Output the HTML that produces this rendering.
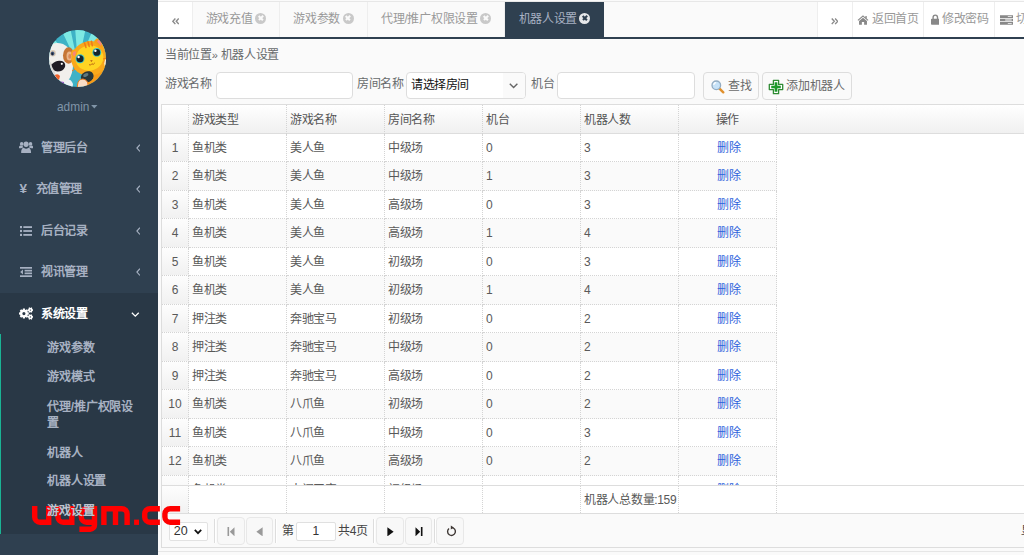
<!DOCTYPE html>
<html lang="zh-CN">
<head>
<meta charset="utf-8">
<title>机器人设置</title>
<style>
*{box-sizing:border-box;margin:0;padding:0}
html,body{width:1024px;height:555px;overflow:hidden}
body{font-family:"Liberation Sans",sans-serif;font-size:12px;color:#676a6c;background:#fafafa;position:relative}
/* sidebar */
#side{position:absolute;left:0;top:0;width:157.6px;height:555px;background:#2f4050;overflow:hidden}
#side .active{position:absolute;left:0;top:292.600px;width:158px;height:241.400px;background:#293846}
#side .gbar{position:absolute;left:0;top:334.300px;width:1.200px;height:199.700px;background:#1ab394}
.mi{position:absolute;left:0;width:158px;height:20px;line-height:20px;color:#a7b1c2;font-weight:bold;font-size:12px;letter-spacing:-0.4px;white-space:nowrap}
.mi .t{position:absolute;left:41.3px;top:0}
.mi svg{position:absolute}
.si{position:absolute;left:47px;color:#a7b1c2;font-weight:bold;font-size:12px;letter-spacing:-0.15px;line-height:15.5px;width:96px}
#admin{position:absolute;left:57px;top:99px;font-size:11.9px;line-height:16px;color:#8095a8;white-space:nowrap}
/* top bar */
#top{position:absolute;left:158px;top:1px;width:866px;height:38px;background:#fafafa;border-top:1px solid #e7e7e7;border-bottom:2px solid #2f4050}
.tab{position:absolute;top:0;height:35px;line-height:35.800px;color:#999;font-size:12px;letter-spacing:-0.3px;border-right:1px solid #eee;white-space:nowrap;background:#fafafa;text-align:center}
.tab.w{background:#fff;color:#999}
.tab.on{background:#2f4050;color:#a7b1c2;border-right:none}
.x{display:inline-block;width:11px;height:11px;border-radius:50%;background:#c9c9c9;position:relative;vertical-align:-0.8px;margin-left:2.4px}
.x:before,.x:after{content:"";position:absolute;left:2.7px;top:4.7px;width:5.6px;height:1.6px;background:#fafafa;transform:rotate(45deg)}
.x:after{transform:rotate(-45deg)}
.on .x{background:#e6e8ea}
.on .x:before,.on .x:after{background:#2f4050}
/* content */
.lbl{position:absolute;letter-spacing:-0.3px;font-size:12px;line-height:16px;color:#676a6c;white-space:nowrap}
.inp{position:absolute;background:#fff;border:1px solid #ddd;border-radius:4px}
.btn{position:absolute;background:#fafafa;border:1px solid #ddd;border-radius:4px;top:72.200px;height:28.200px;font-size:12px;letter-spacing:-0.3px;color:#6a6a6a;line-height:26px;white-space:nowrap}
/* grid */
#grid{position:absolute;left:161px;top:104px;width:863px;height:444px;background:#fff;border-top:1px solid #ddd;border-left:1px solid #ddd;overflow:hidden}
#hdr{position:absolute;left:0;top:0;width:862px;height:28.5px;background:linear-gradient(#fff,#f0f0f0);border-bottom:1px solid #ddd}
.hc{position:absolute;top:0;height:28.5px;line-height:30.5px;border-right:1px dotted #d4d4d4;color:#555;font-size:12px;letter-spacing:-0.3px;white-space:nowrap}
#gbody{position:absolute;left:0;top:28.5px;width:862px;height:352px;overflow:hidden}
#gfoot{position:absolute;left:0;top:380.3px;width:862px;height:28.1px;border-top:1px solid #ddd;background:#fff}
.row{position:absolute;left:0;height:28.5px;width:615px}
.row.odd{background:#fafafa}
.c{position:absolute;top:0;height:28.5px;line-height:29px;border-right:1px dotted #d4d4d4;border-bottom:1px dotted #d4d4d4;color:#595959;font-size:12px;letter-spacing:-0.3px;padding-left:3px;white-space:nowrap;overflow:hidden}
.c.n{left:0;width:27px;text-align:center;padding:0;letter-spacing:0;line-height:28px;background:linear-gradient(#fdfdfd,#f1f1f1);font-size:12px}
.c.a{left:27px;width:98px}.c.b{left:125px;width:98px}.c.d{left:223px;width:98px}.c.e{left:321px;width:98px}.c.f{left:419px;width:98px}
.c.g{left:517px;width:98px;text-align:center;padding:0 0 0 3px;color:#2e62dc}
#pager{position:absolute;left:0;top:408.4px;width:862px;height:34.5px;background:#fafafa;border-top:1px solid #ddd;border-bottom:1px solid #ddd}
.pb{position:absolute;top:3px;width:27.6px;height:27.5px;border:1px solid #e8e8e8;border-radius:4px;background:#f8f8f8}
.psep{position:absolute;top:5px;width:1px;height:24px;background:#ddd;border-right:1px solid #fff;width:2px}

</style>
</head>
<body>
<div id="side">
<div class="active"></div><div class="gbar"></div>
<div style="position:absolute;left:48.700px;top:29.900px;width:57.600px;height:57.600px;border-radius:50%;overflow:hidden"><svg style="position:absolute;left:-0.700px;top:-0.900px" width="60" height="60" viewBox="0 0 60 60">
<g>
<rect width="60" height="60" fill="#3eb2c6"/>
<path d="M30 36 L12 -2 L22 -2Z M30 36 L27 -2 L38 -2Z M30 36 L46 -2 L56 2Z M30 36 L2 6 L-3 16Z M30 36 L60 8 L62 18Z" fill="#7ee9e3"/>
<path d="M-2 18 Q6 12 15 15 Q24 19 25 30 Q26 44 20 52 L12 60 L-2 60Z" fill="#f1efec"/>
<path d="M-2 34 Q4 30 6 40 Q8 50 14 56 L12 60 L-2 60Z" fill="#dcdad8"/>
<ellipse cx="20.600" cy="26.500" rx="5.600" ry="8.200" fill="#c67636"/>
<ellipse cx="21.500" cy="27" rx="3" ry="4.600" fill="#eab58a"/>
<ellipse cx="21.800" cy="27.400" rx="1.500" ry="2.400" fill="#d98a58"/>
<ellipse cx="4.800" cy="24.300" rx="3" ry="3.300" fill="#d9c9b4"/>
<ellipse cx="4.600" cy="24.600" rx="1.900" ry="2.100" fill="#4a5f86"/>
<ellipse cx="4.400" cy="24.800" rx="1" ry="1.200" fill="#1d2230"/>
<path d="M3.500 35.500 Q8 30.500 14 32 Q18 33.500 17 38 Q15 42.500 9.500 42.500 Q4.500 42 3.500 35.500Z" fill="#1f1c25"/>
<circle cx="13.800" cy="34.800" r="1.100" fill="#fff"/>
<path d="M7 46 Q10 44 12 47 L11 51 L8 50Z" fill="#f0622c"/>
<path d="M9 52 L16 53 L15 57 L8 56Z" fill="#8f3cc8"/>
<path d="M17 52 Q22 48 25 55 L24 62 L17 62Z" fill="#eef2f5"/>
<path d="M34 44 Q44 40 58 36 L62 50 Q54 58 44 60 L36 58Z" fill="#f79a18"/>
<ellipse cx="42" cy="29.500" rx="18.800" ry="17.300" fill="#f9a81b" transform="rotate(-14 42 29.500)"/>
<ellipse cx="41.500" cy="29" rx="14" ry="12.500" fill="#ffd422" transform="rotate(-14 41.500 29)"/>
<path d="M23 26 Q23 19 29 21 Q30 24 27 29Z" fill="#f9a81b"/>
<path d="M24.500 25.500 Q25 21.500 28 22.500 Q28 25 26.500 27.500Z" fill="#f6857a"/>
<path d="M46 13 Q49 6 54 12 Q56 16 54 19Z" fill="#f9a01a"/>
<path d="M49 12.500 Q51 9.500 53 13 Q54 15.500 53 17Z" fill="#f6857a"/>
<path d="M36.500 14 l1.500 4.500 M40 12.800 l1.200 4.600 M43.500 12.300 l.8 4.500" stroke="#ee7a1a" stroke-width="1.500" fill="none" stroke-linecap="round"/>
<path d="M55 30 l4 -1 M55.500 33 l4 .5 M27 40 l-3 2" stroke="#ee7a1a" stroke-width="1" fill="none"/>
<circle cx="32" cy="29.700" r="4.500" fill="#35c0c6"/>
<circle cx="32" cy="29.700" r="3.500" fill="#16242b"/>
<circle cx="48.800" cy="23.400" r="4.400" fill="#35c0c6"/>
<circle cx="48.800" cy="23.400" r="3.400" fill="#16242b"/>
<circle cx="30.600" cy="28" r="1.200" fill="#fff"/><circle cx="47.400" cy="21.800" r="1.200" fill="#fff"/>
<path d="M42 31.600 l2.600 -.6 l-.9 1.900Z" fill="#b25a14"/>
<path d="M41 35.600 q1.600 1.400 2.800 -.8 q1.600 1.500 3 -.9" stroke="#b25a14" stroke-width=".9" fill="none"/>
<path d="M57.500 30 q3 3 .5 9 q-3 -3 -.5 -9Z" fill="#fff"/>
<ellipse cx="39.200" cy="47.800" rx="6.600" ry="5.400" fill="#27363a" transform="rotate(-25 39.200 47.800)"/>
<ellipse cx="37.800" cy="46" rx="2.800" ry="1.700" fill="#5f787d" transform="rotate(-25 37.800 46)"/>
<path d="M29.500 56 Q30 50 35 50 Q40 51 40 56 L40 62 L29 62Z" fill="#f8dcc6" stroke="#ee7a1a" stroke-width="1"/>
</g>
</svg></div>
<div id="admin">admin</div>
<svg style="position:absolute;left:91.400px;top:105.300px" width="6.600" height="3.600" viewBox="0 0 7 4"><path d="M0 0h7L3.5 4z" fill="#8095a8"/></svg>

<div class="mi" style="top:137.8px"><svg style="left:19.200px;top:3px" width="14.200" height="12.500" viewBox="0 0 16 13" preserveAspectRatio="none"><g fill="#a7b1c2"><circle cx="8" cy="3.4" r="2.9"/><path d="M3.4 13c-.6 0-1-.5-1-1.200 0-2.600 1.300-4.700 3.100-4.700.7.600 1.500 1 2.500 1s1.800-.4 2.500-1c1.800 0 3.100 2.100 3.100 4.700 0 .7-.4 1.200-1 1.200z"/><circle cx="3" cy="3" r="2"/><path d="M.6 7.600C.2 7.600 0 7.300 0 6.900 0 5.500.7 4.700 1.600 4.700c.4.400 .9.600 1.400.600.4 0 .8-.1 1.100-.3.100.7.400 1.300.8 1.800-.9.100-1.700.400-2.300.8z"/><circle cx="13" cy="3" r="2"/><path d="M15.400 7.600c.4 0 .6-.3.600-.7 0-1.400-.7-2.200-1.600-2.200-.4.400-.9.600-1.400.6-.4 0-.8-.1-1.100-.3-.1.700-.4 1.300-.8 1.800.9.100 1.700.4 2.300.8z"/></g></svg><span class="t">管理后台</span><svg style="left:135.600px;top:6.300px" width="4.600" height="8.200" viewBox="0 0 5 9"><path d="M4.300.8L1 4.500l3.300 3.700" stroke="#a7b1c2" stroke-width="1.300" fill="none"/></svg></div>

<div class="mi" style="top:178.8px"><span class="t" style="left:19.5px;font-weight:bold;font-size:13.5px">¥</span><span class="t" style="left:35.6px">充值管理</span><svg style="left:135.600px;top:6.300px" width="4.600" height="8.200" viewBox="0 0 5 9"><path d="M4.300.8L1 4.500l3.300 3.700" stroke="#a7b1c2" stroke-width="1.300" fill="none"/></svg></div>

<div class="mi" style="top:220.8px"><svg style="left:19.8px;top:5px" width="12" height="10" viewBox="0 0 13 10" preserveAspectRatio="none"><g fill="#a7b1c2"><rect x="0" y="0" width="2.200" height="2.200"/><rect x="0" y="3.900" width="2.200" height="2.200"/><rect x="0" y="7.800" width="2.200" height="2.200"/><rect x="3.600" y=".2" width="9.400" height="1.800"/><rect x="3.600" y="4.100" width="9.400" height="1.800"/><rect x="3.600" y="8" width="9.400" height="1.800"/></g></svg><span class="t">后台记录</span><svg style="left:135.600px;top:6.300px" width="4.600" height="8.200" viewBox="0 0 5 9"><path d="M4.300.8L1 4.500l3.300 3.700" stroke="#a7b1c2" stroke-width="1.300" fill="none"/></svg></div>

<div class="mi" style="top:261.8px"><svg style="left:19.8px;top:5px" width="12" height="10" viewBox="0 0 13 10" preserveAspectRatio="none"><g fill="#a7b1c2"><rect x="0" y="0" width="13" height="1.700"/><rect x="5" y="2.800" width="8" height="1.700"/><rect x="5" y="5.500" width="8" height="1.700"/><rect x="0" y="8.300" width="13" height="1.700"/><path d="M3.200 2.500L.2 5l3 2.500z"/></g></svg><span class="t">视讯管理</span><svg style="left:135.600px;top:6.300px" width="4.600" height="8.200" viewBox="0 0 5 9"><path d="M4.300.8L1 4.500l3.300 3.700" stroke="#a7b1c2" stroke-width="1.300" fill="none"/></svg></div>

<div class="mi" style="top:303.8px;color:#fff"><svg style="left:19.300px;top:3.300px" width="14.200" height="13" viewBox="0 0 16.200 14.400" preserveAspectRatio="none"><path fill="#fff" fill-rule="evenodd" d="M11.19 6.10L11.19 8.30L9.88 8.60L9.61 9.24L10.33 10.38L8.78 11.93L7.64 11.21L7.00 11.48L6.70 12.79L4.50 12.79L4.20 11.48L3.56 11.21L2.42 11.93L0.87 10.38L1.59 9.24L1.32 8.60L0.01 8.30L0.01 6.10L1.32 5.80L1.59 5.16L0.87 4.02L2.42 2.47L3.56 3.19L4.20 2.92L4.50 1.61L6.70 1.61L7.00 2.92L7.64 3.19L8.78 2.47L10.33 4.02L9.61 5.16L9.88 5.80ZM7.40 7.20A1.8 1.8 0 1 0 3.80 7.20A1.8 1.8 0 1 0 7.40 7.20ZM16.09 2.58L16.09 4.22L15.10 4.34L14.86 4.75L15.26 5.67L13.84 6.49L13.23 5.69L12.77 5.69L12.16 6.49L10.74 5.67L11.14 4.75L10.90 4.34L9.91 4.22L9.91 2.58L10.90 2.46L11.14 2.05L10.74 1.13L12.16 0.31L12.77 1.11L13.23 1.11L13.84 0.31L15.26 1.13L14.86 2.05L15.10 2.46ZM13.70 3.40A0.7 0.7 0 1 0 12.30 3.40A0.7 0.7 0 1 0 13.70 3.40ZM16.09 10.18L16.09 11.82L15.10 11.94L14.86 12.35L15.26 13.27L13.84 14.09L13.23 13.29L12.77 13.29L12.16 14.09L10.74 13.27L11.14 12.35L10.90 11.94L9.91 11.82L9.91 10.18L10.90 10.06L11.14 9.65L10.74 8.73L12.16 7.91L12.77 8.71L13.23 8.71L13.84 7.91L15.26 8.73L14.86 9.65L15.10 10.06ZM13.70 11.00A0.7 0.7 0 1 0 12.30 11.00A0.7 0.7 0 1 0 13.70 11.00Z"/></svg><span class="t">系统设置</span><svg style="left:131.400px;top:8px" width="8.600" height="5.600" viewBox="0 0 9 6"><path d="M.8.900L4.500 4.400 8.200.9" stroke="#fff" stroke-width="1.400" fill="none"/></svg></div>

<div class="si" style="top:341.3px">游戏参数</div>
<div class="si" style="top:370.3px">游戏模式</div>
<div class="si" style="top:400.3px">代理/推广权限设置</div>
<div class="si" style="top:445.8px">机器人</div>
<div class="si" style="top:473.8px">机器人设置</div>
<div class="si" style="top:503.500px;color:#bcc4d0;z-index:5">游戏设置</div>
</div>

<div id="top">
<div class="tab w" style="left:0;width:34.600px"><svg style="position:absolute;left:13.800px;top:16.200px" width="7.500" height="6.600" viewBox="0 0 8 7"><path d="M3.600.500L.9 3.500l2.700 3M7.200.500L4.500 3.500l2.700 3" stroke="#8a8a8a" stroke-width="1.500" fill="none"/></svg></div>
<div class="tab" style="left:34.600px;width:87.400px">游戏充值<span class="x"></span></div>
<div class="tab" style="left:122px;width:88px">游戏参数<span class="x"></span></div>
<div class="tab" style="left:210px;width:137px">代理/推广权限设置<span class="x"></span></div>
<div class="tab on" style="left:347px;width:99px;top:0;height:35px;line-height:35.800px">机器人设置<span class="x"></span></div>
<div class="tab w" style="left:659.4px;width:35.2px;border-left:1px solid #eee"><svg style="position:absolute;left:12.600px;top:16.200px" width="7.500" height="6.600" viewBox="0 0 8 7"><path d="M.8.500l2.700 3-2.700 3M4.400.500l2.700 3-2.700 3" stroke="#8a8a8a" stroke-width="1.500" fill="none"/></svg></div>
<div class="tab w" style="left:694.6px;width:71.2px;text-align:left;padding-left:19.5px"><svg style="position:absolute;left:4.500px;top:13px" width="12" height="10.200" viewBox="0 0 10 9"><path d="M5 .3L.2 4.400l.6.700L5 1.600l4.200 3.500.6-.7L8.300 3.100V.8H7.100v1.300zM1.500 5.300L5 2.400l3.500 2.900V8.700H6V6.200H4v2.500H1.500z" fill="#888"/></svg>返回首页</div>
<div class="tab w" style="left:765.8px;width:71.6px;text-align:left;padding-left:18.2px"><svg style="position:absolute;left:6.800px;top:12.400px" width="8.600" height="11" viewBox="0 0 8 10"><path d="M1.300 4.200V3a2.700 2.700 0 015.400 0v1.200h.6c.4 0 .7.300.7.700v4.300c0 .4-.3.700-.7.700H.7c-.4 0-.7-.3-.7-.700V4.900c0-.4.300-.7.700-.7zM2.600 4.200h2.800V3a1.400 1.400 0 00-2.800 0z" fill="#888"/></svg>修改密码</div>
<div class="tab w" style="left:837.4px;width:40px;text-align:left;padding-left:20.6px;border-right:none"><svg style="position:absolute;left:4.5px;top:13px" width="13" height="10" viewBox="0 0 10 10" preserveAspectRatio="none"><g fill="#888"><path d="M0 .3h10v2.600H0zM6 1.200v.8h3v-.8z" fill-rule="evenodd"/><path d="M0 3.700h10v2.600H0zM4 4.600v.8h5v-.8z" fill-rule="evenodd"/><path d="M0 7.100h10v2.600H0zM6 8v.8h3V8z" fill-rule="evenodd"/></g></svg>切换</div>
</div>

<div class="lbl" style="left:165px;top:46.700px">当前位置<span style="font-size:11px">»</span> 机器人设置</div>
<div class="lbl" style="left:165px;top:76.4px">游戏名称</div>
<div class="inp" style="left:215.500px;top:72.400px;width:137.500px;height:26.300px"></div>
<div class="lbl" style="left:357px;top:76.4px">房间名称</div>
<div class="inp" style="left:406px;top:72.300px;width:119.800px;height:26.300px;overflow:hidden"><span style="position:absolute;left:95.500px;top:0;width:24px;height:26px;background:#fafafa"></span><span style="position:absolute;left:4px;top:3.500px;line-height:16px;font-size:12px;letter-spacing:-0.4px;color:#111">请选择房间</span><svg style="position:absolute;left:102.300px;top:9.300px" width="9.200" height="6" viewBox="0 0 9 6"><path d="M.7.800L4.500 4.600 8.300.8" stroke="#666" stroke-width="1.400" fill="none"/></svg></div>
<div class="lbl" style="left:531px;top:76.4px">机台</div>
<div class="inp" style="left:557px;top:72.300px;width:137.500px;height:26.300px"></div>
<div class="btn" style="left:703.400px;width:55.400px;padding-left:23.600px"><svg style="position:absolute;left:6.500px;top:6.500px" width="14" height="14" viewBox="0 0 14 14"><path d="M8.300 8.300l4 4" stroke="#e0902c" stroke-width="2.400" stroke-linecap="round"/><circle cx="5.300" cy="5.300" r="4.300" fill="#c6e2f8" stroke="#93acc2" stroke-width="1.300"/><path d="M2.800 5a2.600 2.600 0 012.400-2.400" stroke="#fff" stroke-width="1.200" fill="none"/></svg>查找</div>
<div class="btn" style="left:762.200px;width:89.600px;padding-left:23.200px"><svg style="position:absolute;left:5px;top:5.500px" width="16" height="16" viewBox="0 0 16 16"><path d="M5.400 1.300h5.200v4.100h4.100v5.200h-4.100v4.100H5.400v-4.100H1.300V5.400h4.100z" fill="#fff" stroke="#2f8a33" stroke-width="1.300" stroke-linejoin="round"/><path d="M6.900 3.500h2.200v3.400h3.400v2.200H9.100v3.400H6.900V9.100H3.500V6.900h3.400z" fill="#1d9a2a" stroke="#1d9a2a" stroke-width=".5" stroke-linejoin="round"/></svg>添加机器人</div>

<div id="grid">
<div id="hdr">
<div class="hc" style="left:0;width:27px"></div>
<div class="hc" style="left:27px;width:98px;padding-left:3px">游戏类型</div>
<div class="hc" style="left:125px;width:98px;padding-left:3px">游戏名称</div>
<div class="hc" style="left:223px;width:98px;padding-left:3px">房间名称</div>
<div class="hc" style="left:321px;width:98px;padding-left:3px">机台</div>
<div class="hc" style="left:419px;width:98px;padding-left:3px">机器人数</div>
<div class="hc" style="left:517px;width:98px;text-align:center">操作</div>
</div>
<div id="gbody">
<div class="row" style="top:0.0px"><div class="c n">1</div><div class="c a">鱼机类</div><div class="c b">美人鱼</div><div class="c d">中级场</div><div class="c e">0</div><div class="c f">3</div><div class="c g">删除</div></div>
<div class="row odd" style="top:28.5px"><div class="c n">2</div><div class="c a">鱼机类</div><div class="c b">美人鱼</div><div class="c d">中级场</div><div class="c e">1</div><div class="c f">3</div><div class="c g">删除</div></div>
<div class="row" style="top:57.0px"><div class="c n">3</div><div class="c a">鱼机类</div><div class="c b">美人鱼</div><div class="c d">高级场</div><div class="c e">0</div><div class="c f">3</div><div class="c g">删除</div></div>
<div class="row odd" style="top:85.5px"><div class="c n">4</div><div class="c a">鱼机类</div><div class="c b">美人鱼</div><div class="c d">高级场</div><div class="c e">1</div><div class="c f">4</div><div class="c g">删除</div></div>
<div class="row" style="top:114.0px"><div class="c n">5</div><div class="c a">鱼机类</div><div class="c b">美人鱼</div><div class="c d">初级场</div><div class="c e">0</div><div class="c f">3</div><div class="c g">删除</div></div>
<div class="row odd" style="top:142.5px"><div class="c n">6</div><div class="c a">鱼机类</div><div class="c b">美人鱼</div><div class="c d">初级场</div><div class="c e">1</div><div class="c f">4</div><div class="c g">删除</div></div>
<div class="row" style="top:171.0px"><div class="c n">7</div><div class="c a">押注类</div><div class="c b">奔驰宝马</div><div class="c d">初级场</div><div class="c e">0</div><div class="c f">2</div><div class="c g">删除</div></div>
<div class="row odd" style="top:199.5px"><div class="c n">8</div><div class="c a">押注类</div><div class="c b">奔驰宝马</div><div class="c d">中级场</div><div class="c e">0</div><div class="c f">2</div><div class="c g">删除</div></div>
<div class="row" style="top:228.0px"><div class="c n">9</div><div class="c a">押注类</div><div class="c b">奔驰宝马</div><div class="c d">高级场</div><div class="c e">0</div><div class="c f">2</div><div class="c g">删除</div></div>
<div class="row odd" style="top:256.5px"><div class="c n">10</div><div class="c a">鱼机类</div><div class="c b">八爪鱼</div><div class="c d">初级场</div><div class="c e">0</div><div class="c f">2</div><div class="c g">删除</div></div>
<div class="row" style="top:285.0px"><div class="c n">11</div><div class="c a">鱼机类</div><div class="c b">八爪鱼</div><div class="c d">中级场</div><div class="c e">0</div><div class="c f">3</div><div class="c g">删除</div></div>
<div class="row odd" style="top:313.5px"><div class="c n">12</div><div class="c a">鱼机类</div><div class="c b">八爪鱼</div><div class="c d">高级场</div><div class="c e">0</div><div class="c f">2</div><div class="c g">删除</div></div>
<div class="row" style="top:342.0px"><div class="c n">13</div><div class="c a">鱼机类</div><div class="c b">大闹天宫</div><div class="c d">初级场</div><div class="c e">0</div><div class="c f">3</div><div class="c g">删除</div></div>
</div>
<div id="gfoot">
<div class="c n" style="border-bottom:none"></div><div class="c a"></div><div class="c b"></div><div class="c d"></div><div class="c e"></div>
<div class="c f">机器人总数量:159</div><div class="c g"></div>
</div>
<div id="pager">
<div class="inp" style="left:6.800px;top:8px;width:39.200px;height:19px;border-radius:2px;border-color:#e2e2e2"><span style="position:absolute;left:4px;top:1px;font-size:12.500px;line-height:15px;color:#333">20</span><svg style="position:absolute;left:24.500px;top:6px" width="8" height="6" viewBox="0 0 8 6"><path d="M.8.800L4 4.200 7.200.8" stroke="#111" stroke-width="1.700" fill="none"/></svg></div>
<div class="psep" style="left:52px"></div>
<div class="pb" style="left:55px"><svg style="position:absolute;left:9px;top:8.300px" width="8" height="9.600" viewBox="0 0 8 9" preserveAspectRatio="none"><path d="M.5 0h1.600v9H.5zM7.500.3v8.400L2.800 4.500z" fill="#999"/></svg></div>
<div class="pb" style="left:83.500px"><svg style="position:absolute;left:9px;top:8.300px" width="7" height="9.600" viewBox="0 0 6 9" preserveAspectRatio="none"><path d="M5.700.2v8.600L.3 4.500z" fill="#999"/></svg></div>
<div class="psep" style="left:112.500px"></div>
<div class="lbl" style="left:119.500px;top:9px;color:#444">第</div>
<div class="inp" style="left:133.500px;top:8px;width:40.500px;height:19px;border-radius:2px;border-color:#e0e0e0;text-align:center;line-height:17px;color:#333;font-size:12px">1</div>
<div class="lbl" style="left:176px;top:9px;color:#444">共4页</div>
<div class="psep" style="left:210.500px"></div>
<div class="pb" style="left:214.400px"><svg style="position:absolute;left:9.800px;top:8.300px" width="7" height="9.600" viewBox="0 0 6 9" preserveAspectRatio="none"><path d="M.3.200v8.600L5.700 4.500z" fill="#111"/></svg></div>
<div class="pb" style="left:242.600px"><svg style="position:absolute;left:9.600px;top:8.300px" width="8" height="9.600" viewBox="0 0 8 9" preserveAspectRatio="none"><path d="M5.900 0h1.600v9H5.900zM.5.300v8.400L5.200 4.500z" fill="#111"/></svg></div>
<div class="psep" style="left:271.500px"></div>
<div class="pb" style="left:274.300px;width:28px"><svg style="position:absolute;left:8.300px;top:6.800px" width="11" height="12" viewBox="0 0 11 12"><path d="M5.500 2.600A3.900 3.900 0 113 3.500" stroke="#3d3633" stroke-width="1.400" fill="none"/><path d="M4.800.4l3 2.100-3 2.100z" fill="#3d3633"/></svg></div>
<div class="lbl" style="left:859px;top:9px;color:#444">显示1到20,共159记录</div>
</div>

</div>
<div id="botline" style="position:absolute;left:158px;top:551px;width:866px;height:1px;background:#e6e6e6"></div>
<div style="position:absolute;left:158px;top:552px;width:866px;height:3px;background:#fafafa"></div>
<svg style="position:absolute;left:30px;top:500px" width="156" height="38" viewBox="30 500 156 38">
<g fill="none" stroke="#ff0000" stroke-width="5.4">
<path d="M34.7 506V516.9A5.3 5.3 0 0 0 40.0 522.2H48.7M48.7 506V524.9"/>
<path d="M58.0 506V516.9A5.3 5.3 0 0 0 63.3 522.2H71.8M71.8 506V524.9"/>
<path d="M94.5 508.7H86.6A5.3 5.3 0 0 0 81.3 514.0V516.9A5.3 5.3 0 0 0 86.6 522.2H94.5M94.5 506V524.9A4.3 4.3 0 0 1 90.2 529.2H79.4"/>
<path d="M103.9 524.9V506M103.9 508.7H121.8A5.3 5.3 0 0 1 127.1 514.0V524.9M115.5 508.7V524.9"/>
<path d="M159.9 508.7H150.0A5.3 5.3 0 0 0 144.7 514.0V516.9A5.3 5.3 0 0 0 150.0 522.2H159.9"/>
<path d="M180.1 508.7H170.2A5.3 5.3 0 0 0 164.9 514.0V516.9A5.3 5.3 0 0 0 170.2 522.2H180.1"/>
</g>
<rect x="134.100" y="519.600" width="4.900" height="5.300" fill="#ff0000"/>
</svg>

</body>
</html>
